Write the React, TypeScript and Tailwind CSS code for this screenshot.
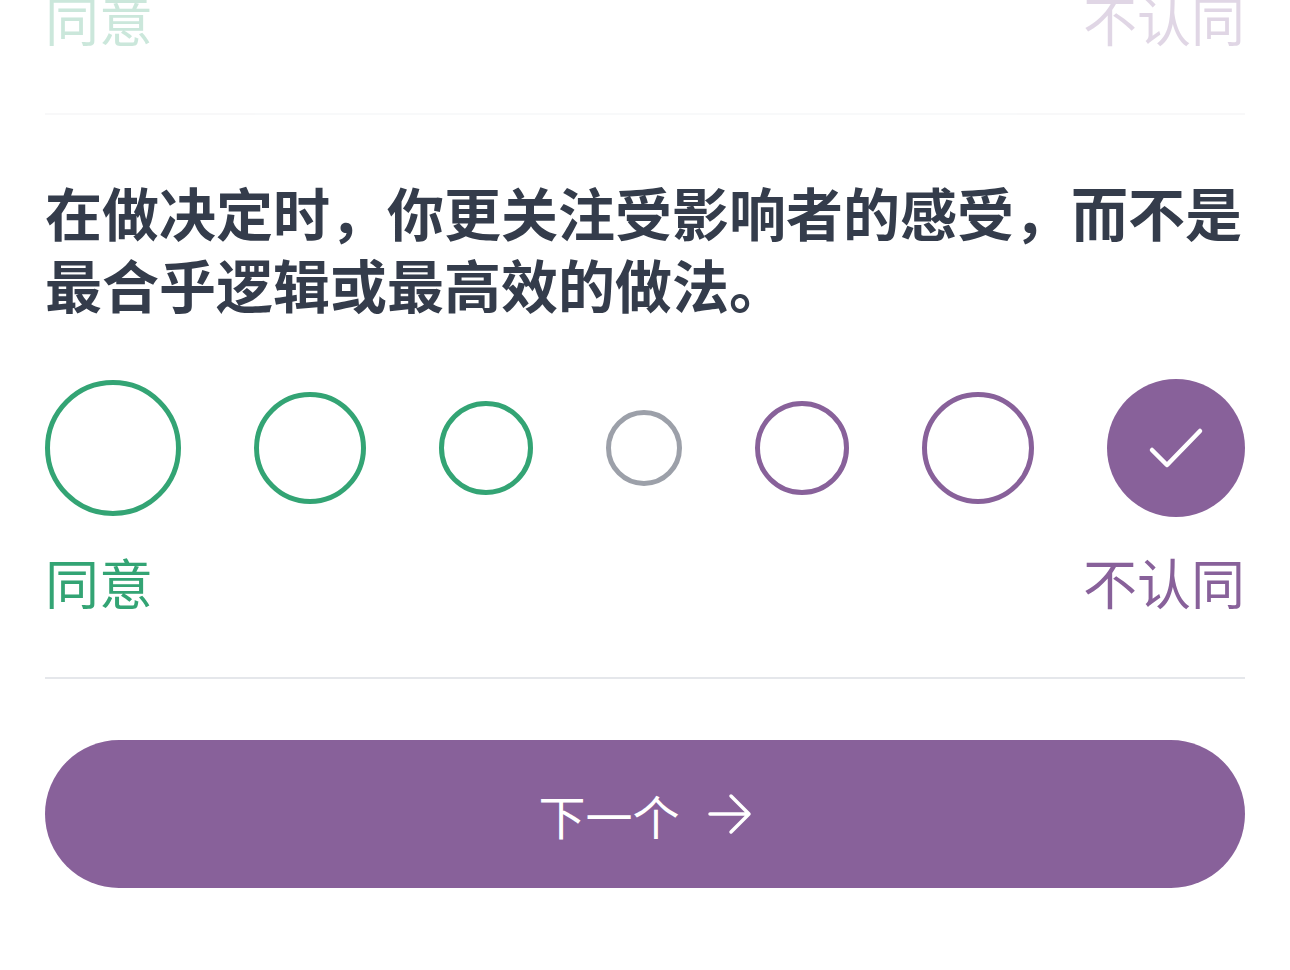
import React from 'react';

const font = { fontFamily: '"Noto Sans CJK SC", "Noto Sans", sans-serif' };

const sizes = [
  { d: 'w-[136px] h-[136px]', c: 'border-[#33a474]' },
  { d: 'w-[112px] h-[112px]', c: 'border-[#33a474]' },
  { d: 'w-[94px] h-[94px]', c: 'border-[#33a474]' },
  { d: 'w-[76px] h-[76px]', c: 'border-[#9ca0a9]' },
  { d: 'w-[94px] h-[94px]', c: 'border-[#88619a]' },
  { d: 'w-[112px] h-[112px]', c: 'border-[#88619a]' },
];

const Labels = () => (
  <div className="flex justify-between text-[54px] leading-[78px]">
    <span className="text-[#33a474]">同意</span>
    <span className="text-[#88619a]">不认同</span>
  </div>
);

export default function App() {
  return (
    <div className="w-[1290px] h-[970px] overflow-hidden bg-white" style={font}>
      <div className="px-[45px]">
        {/* previous question, faded */}
        <div className="opacity-25 mt-[-20px] pb-[55px] border-b-2 border-[#e5e7eb]">
          <Labels />
        </div>

        {/* current question */}
        <div className="pt-[60px] pb-[56px] border-b-2 border-[#e5e7eb]">
          <h2 className="text-[57px] leading-[72px] font-bold text-[#343c4b]">
            在做决定时，你更关注受影响者的感受，而不是最合乎逻辑或最高效的做法。
          </h2>

          <div className="mt-[61px] flex items-center justify-between h-[136px]">
            {sizes.map((s, i) => (
              <div key={i} className={`${s.d} ${s.c} rounded-full border-[5px] bg-white`} />
            ))}
            <div className="w-[138px] h-[138px] rounded-full bg-[#88619a] flex items-center justify-center">
              <svg width="56" height="44" viewBox="0 0 56 44" fill="none">
                <path d="M4 24 L19 39 L52 5" stroke="white" strokeWidth="4.5" strokeLinecap="round" strokeLinejoin="round" />
              </svg>
            </div>
          </div>

          <div className="mt-[27px]">
            <Labels />
          </div>
        </div>

        <button className="mt-[61px] w-full h-[148px] rounded-full bg-[#88619a] flex items-center justify-center gap-[28px] text-white">
          <span className="text-[47px] leading-none">下一个</span>
          <svg width="44" height="42" viewBox="0 0 44 42" fill="none">
            <path d="M2 21 H41 M23 3 L41 21 L23 39" stroke="white" strokeWidth="3.5" strokeLinecap="round" strokeLinejoin="round" />
          </svg>
        </button>
      </div>
    </div>
  );
}
